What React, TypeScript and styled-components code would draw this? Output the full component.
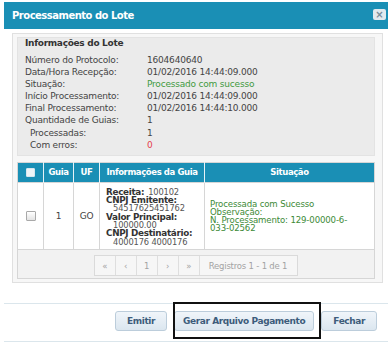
import React from 'react';
import styled, { createGlobalStyle } from 'styled-components';

const GlobalStyle = createGlobalStyle`
  body {
    margin: 0;
    background: #fff;
    font-family: "DejaVu Sans", Verdana, sans-serif;
    color: #444;
  }
`;

const Modal = styled.div`
  width: 384px;
  margin: 2px 0 0 4px;
`;

const Header = styled.div`
  height: 27px;
  background: #1a8fb5;
  display: flex;
  align-items: center;
  justify-content: space-between;
  padding: 0 2px 0 8px;
  box-sizing: border-box;
`;

const Title = styled.h1`
  margin: 0;
  color: #fff;
  font-size: 10px;
  font-weight: bold;
  letter-spacing: -0.5px;
`;

const CloseButton = styled.span`
  width: 13px;
  height: 11px;
  margin-top: -3px;
  border-radius: 2px;
  background: #e2e9ee;
  color: #7a8c9a;
  font-size: 10px;
  font-weight: bold;
  line-height: 11px;
  text-align: center;
`;

const Body = styled.div`
  padding: 4px 5px 20px 8px;
`;

const OuterBox = styled.div`
  border: 1px solid #e0e0e0;
  background: #f7f7f7;
  padding: 3px 7px 3px 4px;
`;

const InfoBox = styled.div`
  background: #ebebeb;
  border: 1px solid #e3e3e3;
  padding: 0 8px 4px 7px;
  margin-bottom: 6px;
`;

const Legend = styled.div`
  font-size: 9px;
  font-weight: bold;
  letter-spacing: -0.3px;
  line-height: 10px;
  color: #333;
  margin-bottom: 6px;
`;

const InfoRow = styled.div<{ $indent?: boolean }>`
  display: grid;
  grid-template-columns: 122px 1fr;
  height: 12.1px;
  line-height: 12.1px;
  font-size: 9px;
  letter-spacing: -0.2px;
  padding-left: ${p => (p.$indent ? '5px' : '0')};
  > span:last-child {
    margin-left: ${p => (p.$indent ? '-5px' : '0')};
  }
`;

const Value = styled.span<{ $tone?: 'ok' | 'error' }>`
  color: ${p => (p.$tone === 'ok' ? '#3f9a3f' : p.$tone === 'error' ? '#e5414f' : '#444')};
`;

const Table = styled.table`
  width: 100%;
  border-collapse: collapse;
  table-layout: fixed;
  border: 1px solid #d6d6d6;
  background: #fff;
`;

const Th = styled.th`
  height: 19px;
  padding: 0;
  background: #1a8fb5;
  color: #fff;
  font-size: 8.5px;
  font-weight: bold;
  letter-spacing: -0.4px;
  border-right: 1px solid #e6f2f7;
  text-align: center;
  &:last-child {
    border-right: none;
  }
`;

const Td = styled.td<{ $align?: string }>`
  padding: 0;
  border: 1px solid #d6d6d6;
  font-size: 9px;
  letter-spacing: -0.2px;
  text-align: ${p => p.$align || 'center'};
  vertical-align: middle;
`;

const Check = styled.span<{ $head?: boolean }>`
  display: inline-block;
  vertical-align: middle;
  width: ${p => (p.$head ? '7px' : '8px')};
  height: ${p => (p.$head ? '7px' : '8px')};
  border: 1px solid ${p => (p.$head ? '#d7e6ee' : '#a9a9a9')};
  background: ${p => (p.$head ? '#eef4f7' : 'linear-gradient(#fff, #e3e3e3)')};
  border-radius: 1px;
`;

const GuiaInfo = styled.div`
  padding: 5px 2px 3px 6px;
  line-height: 8.3px;
  white-space: nowrap;
`;

const Label = styled.b`
  font-size: 8.8px;
  letter-spacing: -0.3px;
  color: #333;
`;

const Num = styled.span<{ $block?: boolean }>`
  display: ${p => (p.$block ? 'block' : 'inline')};
  padding-left: ${p => (p.$block ? '7px' : '4px')};
  font-size: 8.3px;
  letter-spacing: -0.15px;
  color: #555;
`;

const Status = styled.div`
  padding: 0 4px 0 5px;
  color: #3c8a36;
  line-height: 8px;
  font-size: 8.6px;
  letter-spacing: -0.15px;
  white-space: nowrap;
`;

const PagerCell = styled.td`
  padding: 4px 0 2px;
  background: #f2f2f2;
  text-align: center;
`;

const Pager = styled.div`
  display: inline-flex;
  height: 19px;
  border: 1px solid #dadada;
  background: #f6f6f6;
  color: #a3a3a3;
  font-size: 8.5px;
  letter-spacing: -0.2px;
`;

const PageItem = styled.span<{ $wide?: boolean }>`
  display: flex;
  align-items: center;
  justify-content: center;
  width: ${p => (p.$wide ? 'auto' : '20px')};
  padding: ${p => (p.$wide ? '0 10px 0 9px' : '0')};
  border-right: 1px solid #dedede;
  &:last-child {
    border-right: none;
  }
`;

const Footer = styled.div`
  display: flex;
  justify-content: flex-end;
  gap: 7px;
  padding: 7px 11px 10px 0;
  border-top: 1px solid #dbe6ec;
  border-bottom: 1px solid #dbe6ec;
`;

const Button = styled.button<{ $marked?: boolean }>`
  position: relative;
  height: 20px;
  padding: 0 ${p => (p.$marked ? '8px' : '11px')};
  border: 1px solid #bccddb;
  border-radius: 3px;
  background: linear-gradient(#f0f5fa, #dbe6ef);
  color: #3d5c7b;
  font-family: "DejaVu Sans", Verdana, sans-serif;
  font-size: 9px;
  font-weight: bold;
  letter-spacing: -0.4px;
  & + & {
    margin-left: ${p => (p.$marked ? '0' : '1px')};
  }
  &::after {
    content: '';
    display: ${p => (p.$marked ? 'block' : 'none')};
    position: absolute;
    top: -10px;
    bottom: -9px;
    left: -2px;
    right: -8px;
    border: 2px solid #111;
  }
`;

const info: [string, string, ('ok' | 'error')?, boolean?][] = [
  ['Número do Protocolo:', '1604640640'],
  ['Data/Hora Recepção:', '01/02/2016 14:44:09.000'],
  ['Situação:', 'Processado com sucesso', 'ok'],
  ['Início Processamento:', '01/02/2016 14:44:09.000'],
  ['Final Processamento:', '01/02/2016 14:44:10.000'],
  ['Quantidade de Guias:', '1'],
  ['Processadas:', '1', undefined, true],
  ['Com erros:', '0', 'error', true],
];

export default function App() {
  return (
    <>
      <GlobalStyle />
      <Modal>
        <Header>
          <Title>Processamento do Lote</Title>
          <CloseButton>×</CloseButton>
        </Header>
        <Body>
          <OuterBox>
            <InfoBox>
              <Legend>Informações do Lote</Legend>
              {info.map(([label, value, tone, indent]) => (
                <InfoRow key={label} $indent={indent}>
                  <span>{label}</span>
                  <Value $tone={tone}>{value}</Value>
                </InfoRow>
              ))}
            </InfoBox>
            <Table>
              <colgroup>
                <col style={{ width: 26 }} />
                <col style={{ width: 30 }} />
                <col style={{ width: 26 }} />
                <col style={{ width: 105 }} />
                <col />
              </colgroup>
              <thead>
                <tr>
                  <Th><Check $head /></Th>
                  <Th>Guia</Th>
                  <Th>UF</Th>
                  <Th>Informações da Guia</Th>
                  <Th>Situação</Th>
                </tr>
              </thead>
              <tbody>
                <tr>
                  <Td><Check /></Td>
                  <Td>1</Td>
                  <Td>GO</Td>
                  <Td $align="left">
                    <GuiaInfo>
                      <Label>Receita:</Label><Num>100102</Num><br />
                      <Label>CNPJ Emitente:</Label>
                      <Num $block>54517625451762</Num>
                      <Label>Valor Principal:</Label>
                      <Num $block>100000.00</Num>
                      <Label>CNPJ Destinatário:</Label>
                      <Num $block>4000176 4000176</Num>
                    </GuiaInfo>
                  </Td>
                  <Td $align="left">
                    <Status>
                      Processada com Sucesso<br />
                      Observação:<br />
                      N. Processamento: 129-00000-6-<br />
                      033-02562
                    </Status>
                  </Td>
                </tr>
                <tr>
                  <PagerCell colSpan={5}>
                    <Pager>
                      <PageItem>«</PageItem>
                      <PageItem>‹</PageItem>
                      <PageItem>1</PageItem>
                      <PageItem>›</PageItem>
                      <PageItem>»</PageItem>
                      <PageItem $wide>Registros 1 - 1 de 1</PageItem>
                    </Pager>
                  </PagerCell>
                </tr>
              </tbody>
            </Table>
          </OuterBox>
        </Body>
        <Footer>
          <Button>Emitir</Button>
          <Button $marked>Gerar Arquivo Pagamento</Button>
          <Button>Fechar</Button>
        </Footer>
      </Modal>
    </>
  );
}
